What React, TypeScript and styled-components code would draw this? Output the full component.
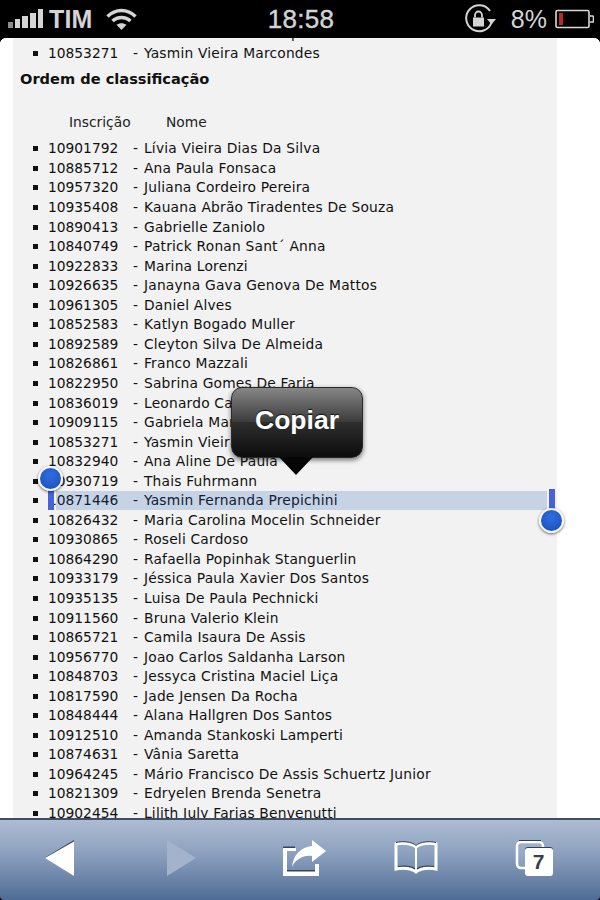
import React from 'react';
import styled, { createGlobalStyle } from 'styled-components';

const GlobalStyle = createGlobalStyle`
  html, body {
    margin: 0;
    padding: 0;
    background: #000;
  }
  * {
    box-sizing: border-box;
  }
`;

const Screen = styled.div`
  width: 600px;
  height: 900px;
  display: flex;
  flex-direction: column;
  overflow: hidden;
  position: relative;
  font-family: "DejaVu Sans", Verdana, sans-serif;
`;

const StatusBar = styled.div`
  height: 38px;
  flex: none;
  background: #000;
  color: #d4d4d4;
  display: grid;
  grid-template-columns: 1fr auto 1fr;
  align-items: center;
  padding: 0 6px 0 8px;
  font-family: "Liberation Sans", Arial, sans-serif;
`;

const StatusSide = styled.div<{ $end?: boolean }>`
  display: flex;
  align-items: center;
  justify-content: ${(p) => (p.$end ? 'flex-end' : 'flex-start')};
`;

const Carrier = styled.span`
  font-size: 25px;
  font-weight: 700;
  margin: 0 13px 0 5px;
  letter-spacing: 0.2px;
`;

const Clock = styled.span`
  font-size: 26px;
  font-weight: 400;
  letter-spacing: 0.3px;
  -webkit-text-stroke: 0.4px #d4d4d4;
`;

const BatteryText = styled.span`
  font-size: 25px;
  margin: 0 8px 0 14px;
`;

const Viewport = styled.div`
  flex: 1;
  min-height: 0;
  background: #fff;
  overflow: hidden;
  position: relative;

  &::before,
  &::after {
    content: '';
    position: absolute;
    top: 0;
    width: 5px;
    height: 5px;
    z-index: 3;
  }
  &::before {
    left: 0;
    background: radial-gradient(circle at 100% 100%, transparent 4.5px, #000 5px);
  }
  &::after {
    right: 0;
    background: radial-gradient(circle at 0 100%, transparent 4.5px, #000 5px);
  }
`;

const Panel = styled.div`
  width: 544px;
  margin: -13.6px 0 0 13px;
  background: #f2f2f2;
  color: #111;
  font-size: 13.8px;
  height: 820px;
  isolation: isolate;
`;

const List = styled.ul`
  list-style: none;
  margin: 0;
  padding: 0 0 0 20px;
`;

const Row = styled.li<{ $selected?: boolean }>`
  height: 19.56px;
  line-height: 19.56px;
  display: flex;
  white-space: nowrap;
  position: relative;
  color: ${(p) => (p.$selected ? '#10203a' : '#111')};

  &::before {
    content: '';
    width: 5px;
    height: 5px;
    background: #111;
    margin: 7px 10px 0 0;
    flex: none;
  }
  ${(p) =>
    p.$selected &&
    `
    &::after {
      content: '';
      position: absolute;
      z-index: -1;
      left: 23px;
      right: 10px;
      top: 0;
      bottom: 1px;
      background: #c5d3e4;
    }
  `}
`;

const Code = styled.span`
  width: 85px;
  flex: none;
`;

const Name = styled.span`
  margin-left: 6px;
  letter-spacing: 0.2px;
`;

const Heading = styled.h3`
  margin: 5.4px 0 0 7px;
  height: 20px;
  line-height: 20px;
  font-size: 14.6px;
  font-weight: 700;
  color: #111;
`;

const Columns = styled.div`
  display: flex;
  margin: 23px 0 7.5px 56px;
  height: 20px;
  line-height: 20px;
  color: #222;
`;

const ColumnLabel = styled.span<{ $width?: number }>`
  width: ${(p) => (p.$width ? `${p.$width}px` : 'auto')};
`;

const Popup = styled.div`
  position: absolute;
  left: 231px;
  top: 349px;
  width: 132px;
  height: 71px;
  border-radius: 11px;
  border: 1px solid #2a2a2a;
  background: linear-gradient(#868686 0%, #3c3c3c 49%, #2e2e2e 50%, #0c0c0c 100%);
  box-shadow: 0 2px 5px rgba(0, 0, 0, 0.55);
  display: flex;
  justify-content: center;
  padding-top: 18px;
  color: #fff;
  font-family: "Liberation Sans", Arial, sans-serif;
  font-weight: 700;
  font-size: 26.5px;
  line-height: 29px;
  text-shadow: 0 -1px 1px rgba(0, 0, 0, 0.8);
  z-index: 2;

  &::after {
    content: '';
    position: absolute;
    left: 47px;
    top: 69px;
    border-left: 17px solid transparent;
    border-right: 17px solid transparent;
    border-top: 18px solid #060606;
  }
`;

const HandleBar = styled.div<{ $side: 'left' | 'right' }>`
  position: absolute;
  width: 6px;
  height: 20px;
  background: #4664d8;
  top: ${(p) => (p.$side === 'left' ? '452px' : '451px')};
  left: ${(p) => (p.$side === 'left' ? '48px' : '549px')};
  z-index: 2;
`;

const HandleKnob = styled.div<{ $side: 'left' | 'right' }>`
  position: absolute;
  width: 25px;
  height: 25px;
  border-radius: 50%;
  border: 2px solid #f4f6fa;
  background: radial-gradient(circle at 50% 35%, #2f6ee0, #1a4db8);
  box-shadow: 0 1px 3px rgba(0, 0, 0, 0.6);
  top: ${(p) => (p.$side === 'left' ? '428px' : '470px')};
  left: ${(p) => (p.$side === 'left' ? '38px' : '539px')};
  z-index: 2;
`;

const Toolbar = styled.div`
  height: 82px;
  flex: none;
  border-top: 2px solid #3f4d60;
  background: linear-gradient(#adbcd2 0%, #8ea2bf 40%, #4f6c96 100%);
  display: grid;
  grid-template-columns: 120px 122px 126px 96px 136px;
  align-items: center;
  justify-items: center;
  padding-bottom: 4px;
  border-radius: 0 0 4px 4px;
`;

const ToolIcon = styled.svg`
  display: block;
  overflow: visible;
`;

const TabCount = styled.span`
  position: absolute;
  left: 10px;
  top: 8px;
  width: 28px;
  height: 28px;
  border-radius: 3px;
  background: #fff;
  box-shadow: 0 -1px 0 #2f3f57;
  color: #3a3f47;
  font-family: "Liberation Sans", Arial, sans-serif;
  font-weight: 700;
  font-size: 21px;
  line-height: 28px;
  text-align: center;
`;

const TabsButton = styled.div`
  position: relative;
  width: 38px;
  height: 36px;
  margin-left: 3px;
`;

const entries: [string, string][] = [
  ['10901792', 'Lívia Vieira Dias Da Silva'],
  ['10885712', 'Ana Paula Fonsaca'],
  ['10957320', 'Juliana Cordeiro Pereira'],
  ['10935408', 'Kauana Abrão Tiradentes De Souza'],
  ['10890413', 'Gabrielle Zaniolo'],
  ['10840749', 'Patrick Ronan Sant´ Anna'],
  ['10922833', 'Marina Lorenzi'],
  ['10926635', 'Janayna Gava Genova De Mattos'],
  ['10961305', 'Daniel Alves'],
  ['10852583', 'Katlyn Bogado Muller'],
  ['10892589', 'Cleyton Silva De Almeida'],
  ['10826861', 'Franco Mazzali'],
  ['10822950', 'Sabrina Gomes De Faria'],
  ['10836019', 'Leonardo Carvalho'],
  ['10909115', 'Gabriela Martins De Souza'],
  ['10853271', 'Yasmin Vieira Marcondes'],
  ['10832940', 'Ana Aline De Paula'],
  ['10930719', 'Thais Fuhrmann'],
  ['10871446', 'Yasmin Fernanda Prepichini'],
  ['10826432', 'Maria Carolina Mocelin Schneider'],
  ['10930865', 'Roseli Cardoso'],
  ['10864290', 'Rafaella Popinhak Stanguerlin'],
  ['10933179', 'Jéssica Paula Xavier Dos Santos'],
  ['10935135', 'Luisa De Paula Pechnicki'],
  ['10911560', 'Bruna Valerio Klein'],
  ['10865721', 'Camila Isaura De Assis'],
  ['10956770', 'Joao Carlos Saldanha Larson'],
  ['10848703', 'Jessyca Cristina Maciel Liça'],
  ['10817590', 'Jade Jensen Da Rocha'],
  ['10848444', 'Alana Hallgren Dos Santos'],
  ['10912510', 'Amanda Stankoski Lamperti'],
  ['10874631', 'Vânia Saretta'],
  ['10964245', 'Mário Francisco De Assis Schuertz Junior'],
  ['10821309', 'Edryelen Brenda Senetra'],
  ['10902454', 'Lilith July Farias Benvenutti'],
];

const Signal = () => (
  <svg width="36" height="20" viewBox="0 0 36 20">
    <rect x="0" y="13" width="5" height="6" fill="#8c8c8c" />
    <rect x="7" y="10" width="5" height="9" fill="#d4d4d4" />
    <rect x="14" y="7" width="6" height="12" fill="#d4d4d4" />
    <rect x="22" y="4" width="6" height="15" fill="#d4d4d4" />
    <rect x="30" y="0" width="5" height="19" fill="#d4d4d4" />
  </svg>
);

const Wifi = () => (
  <svg width="31" height="23" viewBox="0 0 31 23" fill="none" stroke="#d4d4d4" strokeWidth="3.4">
    <path d="M1.5 8.5C9.5 0.5 21.5 0.5 29.5 8.5" />
    <path d="M6.5 13C11.5 8.3 19.5 8.3 24.5 13" />
    <path d="M15.5 22L10.5 16.8C13.5 14.6 17.5 14.6 20.5 16.8Z" fill="#d4d4d4" stroke="none" />
  </svg>
);

const RotationLock = () => (
  <svg width="33" height="30" viewBox="0 0 33 30" fill="none">
    <path d="M27.5 18.5A13 13 0 1 1 26 7" stroke="#d4d4d4" strokeWidth="2" />
    <path d="M23 15h9l-4.5 5.5z" fill="#d4d4d4" />
    <rect x="9" y="13.5" width="11" height="9" fill="#d4d4d4" />
    <path d="M11 13.5v-2.5a3.5 3.5 0 0 1 7 0v2.5" stroke="#d4d4d4" strokeWidth="1.8" />
  </svg>
);

const Battery = () => (
  <svg width="39" height="20" viewBox="0 0 39 20" fill="none">
    <rect x="1" y="1.5" width="33" height="17" rx="1.5" stroke="#d8d8d8" strokeWidth="1.6" />
    <rect x="4" y="4" width="4" height="12" fill="#b52a2a" />
    <path d="M35 7h2.5a1 1 0 0 1 1 1v4a1 1 0 0 1-1 1H35" stroke="#d8d8d8" strokeWidth="1.6" />
  </svg>
);

const Back = () => (
  <ToolIcon width="30" height="36" viewBox="0 0 30 36">
    <path d="M0 17.500L29 0v2L1 18z" fill="#3a4a60" />
    <path d="M0 18L29 1.500V36z" fill="#fff" />
  </ToolIcon>
);

const Forward = () => (
  <ToolIcon width="30" height="36" viewBox="0 0 30 36">
    <path d="M1 0L30 18L1 36z" fill="#a2b3cb" />
  </ToolIcon>
);

const Share = () => (
  <ToolIcon width="44" height="37" viewBox="0 0 44 37">
    <path d="M0 8h13v3H4v20h28v-7h4v12H0z" fill="#fff" />
    <path d="M0 6.500h12V8H0zM4 30h28v1.500H4z" fill="#34455e" />
    <path d="M29 0L43 11L29 22V16C20 15 13 19 9 27C10 15 18 7 29 6z" fill="#fff" />
  </ToolIcon>
);

const Bookmarks = () => (
  <ToolIcon width="46" height="34" viewBox="0 0 46 34" fill="none">
    <path
      d="M23 6C19 2 9 1.500 3 3v25c6-1.500 16-1 20 3 4-4 14-4.500 20-3V3c-6-1.500-16-1-20 3z"
      stroke="#fff"
      strokeWidth="3"
    />
    <path d="M23 6v25" stroke="#fff" strokeWidth="2" />
    <path d="M3 1.500c6-1.500 16-1 20 3 4-4 14-4.500 20-3" stroke="#2f3f57" strokeWidth="1" />
    <path d="M5 25.500c6-1 14-.5 17 2.500M41 25.500c-6-1-14-.5-17 2.500" stroke="#2f3f57" strokeWidth="1.200" />
  </ToolIcon>
);

const TabsBack = () => (
  <ToolIcon width="30" height="30" viewBox="0 0 30 30" fill="none">
    <rect x="2" y="2" width="26" height="26" rx="4" fill="rgba(255,255,255,0.1)" stroke="#fff" strokeWidth="2.500" />
    <path d="M4 0.500h22" stroke="#2f3f57" strokeWidth="1" />
  </ToolIcon>
);

const App: React.FC = () => {
  return (
    <Screen>
      <GlobalStyle />
      <StatusBar>
        <StatusSide>
          <Signal />
          <Carrier>TIM</Carrier>
          <Wifi />
        </StatusSide>
        <Clock>18:58</Clock>
        <StatusSide $end>
          <RotationLock />
          <BatteryText>8%</BatteryText>
          <Battery />
        </StatusSide>
      </StatusBar>

      <Viewport>
        <Panel>
          <List>
            <Row>
              <Code>10871446</Code>-<Name>Yasmin Fernanda Prepichini</Name>
            </Row>
            <Row>
              <Code>10853271</Code>-<Name>Yasmin Vieira Marcondes</Name>
            </Row>
          </List>
          <Heading>Ordem de classificação</Heading>
          <Columns>
            <ColumnLabel $width={97}>Inscrição</ColumnLabel>
            <ColumnLabel>Nome</ColumnLabel>
          </Columns>
          <List>
            {entries.map(([code, name]) => (
              <Row key={code} $selected={code === '10871446'}>
                <Code>{code}</Code>-<Name>{name}</Name>
              </Row>
            ))}
          </List>
        </Panel>

        <HandleBar $side="left" />
        <HandleKnob $side="left" />
        <HandleBar $side="right" />
        <HandleKnob $side="right" />
        <Popup>Copiar</Popup>
      </Viewport>

      <Toolbar>
        <Back />
        <Forward />
        <Share />
        <Bookmarks />
        <TabsButton>
          <TabsBack />
          <TabCount>7</TabCount>
        </TabsButton>
      </Toolbar>
    </Screen>
  );
};

export default App;
